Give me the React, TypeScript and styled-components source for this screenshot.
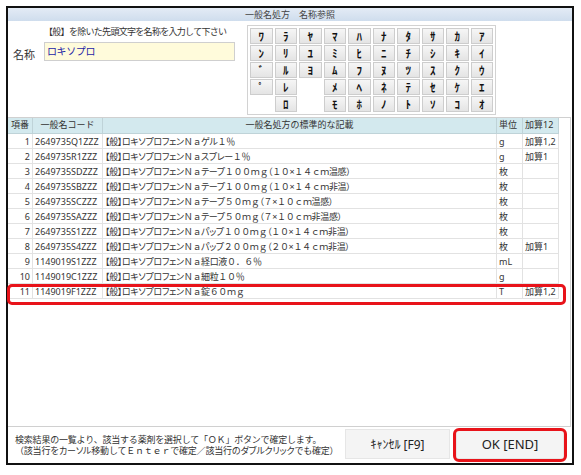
import React from 'react'
import styled, { createGlobalStyle } from 'styled-components'

const GlobalStyle = createGlobalStyle`
  html, body {
    margin: 0;
    padding: 0;
    background: #fff;
  }
  body {
    font-family: 'Noto Sans', 'Noto Sans CJK JP', sans-serif;
    color: #333;
  }
`

const Window = styled.div`
  position: relative;
  margin: 6px 0 0 6px;
  width: 568px;
  height: 459px;
  box-sizing: border-box;
  border: 2px solid #111;
  display: flex;
  flex-direction: column;
  background: #fff;
`

const TitleBar = styled.div`
  height: 13px;
  line-height: 13px;
  text-align: center;
  font-size: 9px;
  color: #444;
  background: linear-gradient(#e3ebf5, #cfdded);
`

const TopSection = styled.div`
  display: flex;
  height: 96px;
  flex-shrink: 0;
`

const NamePanel = styled.div`
  width: 239px;
  padding: 5px 0 0 5px;
  box-sizing: border-box;
`

const Hint = styled.div`
  margin-left: 31px;
  font-size: 9px;
  line-height: 12px;
  letter-spacing: -0.7px;
  color: #333;
`

const NameRow = styled.div`
  display: flex;
  align-items: center;
  margin-top: 2px;
`

const NameLabel = styled.span`
  width: 31px;
  padding-top: 6px;
  font-size: 11px;
  color: #333;
`

const NameInput = styled.div`
  width: 191px;
  height: 19px;
  box-sizing: border-box;
  border: 1px solid #cfcfcf;
  background: #fffbdb;
  padding-left: 2px;
  font-size: 10px;
  line-height: 17px;
  letter-spacing: -0.4px;
  color: #2424a6;
`

const KanaBox = styled.div`
  margin-top: 4px;
  width: 249px;
  height: 90px;
  box-sizing: border-box;
  border: 1px solid #d2d2d2;
  padding: 2px;
  display: grid;
  grid-template-columns: repeat(10, 22.5px);
  grid-template-rows: repeat(5, 16px);
  gap: 1px 2px;
`

const KanaKey = styled.div<{ $blank?: boolean }>`
  display: flex;
  align-items: center;
  justify-content: center;
  box-sizing: border-box;
  min-height: 0;
  overflow: hidden;
  border: 1px solid ${(p) => (p.$blank ? 'transparent' : '#cdcdcd')};
  background: ${(p) => (p.$blank ? 'transparent' : 'linear-gradient(#f6f6f6, #e4e4e4)')};
  font-size: 11px;
  line-height: 1;
  font-weight: 700;
  color: #111;
`

const TableArea = styled.div`
  height: 310px;
  flex-shrink: 0;
  box-sizing: border-box;
  border: 1px solid #d0d0d0;
  border-left: none;
  margin-right: 1px;
`

const GridRow = styled.div<{ $head?: boolean }>`
  display: grid;
  grid-template-columns: 25px 70px 394px 26px 36px;
  width: 551px;
  height: ${(p) => (p.$head ? 16 : 15)}px;
  box-sizing: border-box;
  border-bottom: 1px solid ${(p) => (p.$head ? '#bfd3d8' : '#e2e2e2')};
  background: ${(p) => (p.$head ? '#d3e9ee' : '#fff')};
  font-size: 9px;
  line-height: 14px;
  color: #333;
`

const Cell = styled.div<{ $align?: string; $head?: boolean; $tight?: boolean }>`
  border-right: 1px solid ${(p) => (p.$head ? '#bfd3d8' : '#e2e2e2')};
  padding: ${(p) => (p.$head ? '0 2px' : '1px 2px 0')};
  text-align: ${(p) => p.$align || 'left'};
  letter-spacing: ${(p) => (p.$tight ? '-0.35px' : 'normal')};
  white-space: nowrap;
  overflow: hidden;
`

const Footer = styled.div`
  flex: 1;
  display: flex;
  align-items: center;
  padding-left: 7px;
  padding-right: 8px;
`

const Note = styled.div`
  font-size: 9px;
  line-height: 11.5px;
  color: #333;
  letter-spacing: -0.2px;
`

const Narrow = styled.span`
  font-feature-settings: "palt";
`

const Buttons = styled.div`
  margin-left: auto;
  display: flex;
  gap: 6px;
  margin-top: -3px;
`

const Btn = styled.button<{ $w: number; $size: number }>`
  width: ${(p) => p.$w}px;
  height: 30px;
  border: 1px solid #e6e6e6;
  background: #f4f4f4;
  font-family: 'Noto Sans', 'Noto Sans CJK JP', sans-serif;
  font-size: ${(p) => p.$size}px;
  color: #222;
  padding: 0;
`

const Highlight = styled.div<{ $x: number; $y: number; $w: number; $h: number; $r: number }>`
  position: absolute;
  left: ${(p) => p.$x}px;
  top: ${(p) => p.$y}px;
  width: ${(p) => p.$w}px;
  height: ${(p) => p.$h}px;
  box-sizing: border-box;
  border: 3px solid #e8131a;
  border-radius: ${(p) => p.$r}px;
  pointer-events: none;
`

const kana = [
  ['ﾜ', 'ﾗ', 'ﾔ', 'ﾏ', 'ﾊ', 'ﾅ', 'ﾀ', 'ｻ', 'ｶ', 'ｱ'],
  ['ﾝ', 'ﾘ', 'ﾕ', 'ﾐ', 'ﾋ', 'ﾆ', 'ﾁ', 'ｼ', 'ｷ', 'ｲ'],
  ['ﾞ', 'ﾙ', 'ﾖ', 'ﾑ', 'ﾌ', 'ﾇ', 'ﾂ', 'ｽ', 'ｸ', 'ｳ'],
  ['ﾟ', 'ﾚ', '', 'ﾒ', 'ﾍ', 'ﾈ', 'ﾃ', 'ｾ', 'ｹ', 'ｴ'],
  ['', 'ﾛ', '', 'ﾓ', 'ﾎ', 'ﾉ', 'ﾄ', 'ｿ', 'ｺ', 'ｵ'],
]

// [code, dosage form, strength, unit, addition]
const rows = [
  ['2649735Q1ZZZ', 'ゲル', '１％', 'g', '加算1,2'],
  ['2649735R1ZZZ', 'スプレー', '１％', 'g', '加算1'],
  ['2649735SDZZZ', 'テープ', '１００ｍｇ（１０×１４ｃｍ温感）', '枚', ''],
  ['2649735SBZZZ', 'テープ', '１００ｍｇ（１０×１４ｃｍ非温）', '枚', ''],
  ['2649735SCZZZ', 'テープ', '５０ｍｇ（７×１０ｃｍ温感）', '枚', ''],
  ['2649735SAZZZ', 'テープ', '５０ｍｇ（７×１０ｃｍ非温感）', '枚', ''],
  ['2649735S1ZZZ', 'パップ', '１００ｍｇ（１０×１４ｃｍ非温）', '枚', ''],
  ['2649735S4ZZZ', 'パップ', '２００ｍｇ（２０×１４ｃｍ非温）', '枚', '加算1'],
  ['1149019S1ZZZ', '経口液', '０．６％', 'mL', ''],
  ['1149019C1ZZZ', '細粒', '１０％', 'g', ''],
  ['1149019F1ZZZ', '錠', '６０ｍｇ', 'T', '加算1,2'],
]

// brackets are set proportionally, full-width digits keep their width
const Strength = ({ text }: { text: string }) => (
  <>
    {text.split(/([（）×])/).map((part, i) =>
      /^[（）×]$/.test(part) ? <Narrow key={i}>{part}</Narrow> : part
    )}
  </>
)

export default function App() {
  return (
    <>
      <GlobalStyle />
      <Window>
        <TitleBar>一般名処方　名称参照</TitleBar>
        <TopSection>
          <NamePanel>
            <Hint>【般】を除いた先頭文字を名称を入力して下さい</Hint>
            <NameRow>
              <NameLabel>名称</NameLabel>
              <NameInput>ロキソプロ</NameInput>
            </NameRow>
          </NamePanel>
          <KanaBox>
            {kana.flat().map((k, i) => (
              <KanaKey key={i} $blank={!k}>
                {k}
              </KanaKey>
            ))}
          </KanaBox>
        </TopSection>
        <TableArea>
          <GridRow $head>
            <Cell $head $align="center">項番</Cell>
            <Cell $head $align="center">一般名コード</Cell>
            <Cell $head $align="center">一般名処方の標準的な記載</Cell>
            <Cell $head>単位</Cell>
            <Cell $head>加算12</Cell>
          </GridRow>
          {rows.map((r, i) => (
            <GridRow key={i}>
              <Cell $align="right">{i + 1}</Cell>
              <Cell>{r[0]}</Cell>
              <Cell $tight>
                <Narrow>【般】ロキソプロフェン</Narrow>Ｎａ<Narrow>{r[1]}</Narrow>
                <Strength text={r[2]} />
              </Cell>
              <Cell>{r[3]}</Cell>
              <Cell>{r[4]}</Cell>
            </GridRow>
          ))}
        </TableArea>
        <Footer>
          <Note>
            検索結果の一覧より、該当する薬剤を選択して「ＯＫ」ボタンで確定します。
            <br />
            （該当行を<Narrow>カーソル</Narrow>移動してＥｎｔｅｒで確定／該当行の<Narrow>ダブルクリック</Narrow>でも確定）
          </Note>
          <Buttons>
            <Btn $w={105} $size={12}>ｷｬﾝｾﾙ [F9]</Btn>
            <Btn $w={108} $size={13}>OK [END]</Btn>
          </Buttons>
        </Footer>
        <Highlight $x={-1} $y={276} $w={559} $h={21} $r={5} />
        <Highlight $x={445} $y={420} $w={114} $h={34} $r={6} />
      </Window>
    </>
  )
}
